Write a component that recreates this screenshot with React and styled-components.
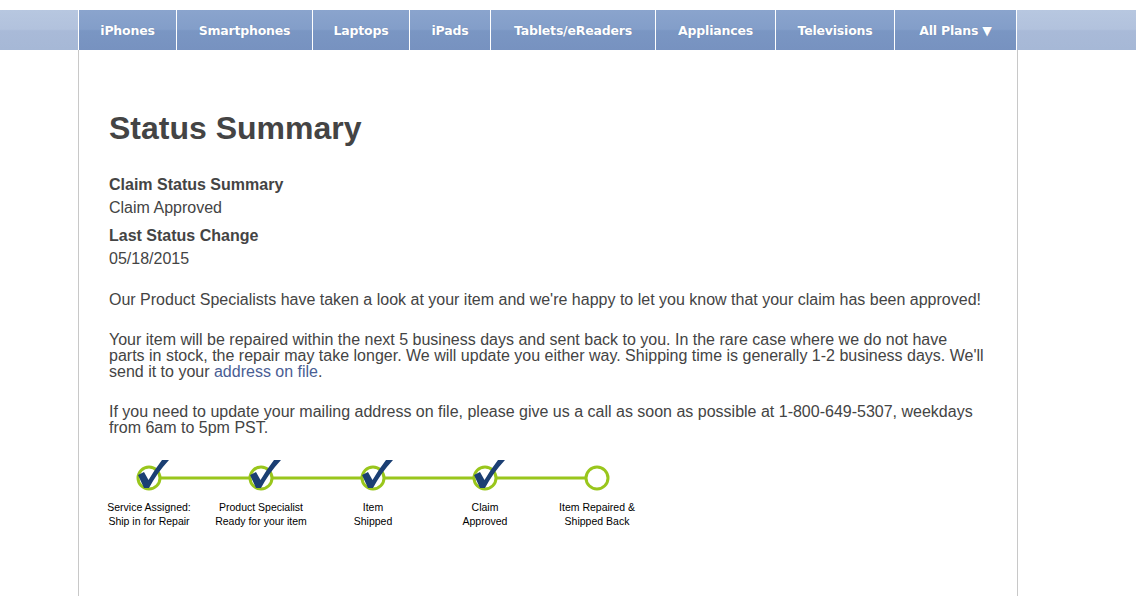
import React from "react";
import styled, { createGlobalStyle } from "styled-components";

const GlobalStyle = createGlobalStyle`
  html, body {
    margin: 0;
    padding: 0;
    background: #fff;
    font-family: "Liberation Sans", Arial, sans-serif;
  }
`;

const NAV_ITEMS = [
  { label: "iPhones", width: 98 },
  { label: "Smartphones", width: 136 },
  { label: "Laptops", width: 97 },
  { label: "iPads", width: 81 },
  { label: "Tablets/eReaders", width: 165 },
  { label: "Appliances", width: 120 },
  { label: "Televisions", width: 119 },
  { label: "All Plans \u25BC", width: 123 },
];

const STEPS = [
  { lines: ["Service Assigned:", "Ship in for Repair"], done: true },
  { lines: ["Product Specialist", "Ready for your item"], done: true },
  { lines: ["Item", "Shipped"], done: true },
  { lines: ["Claim", "Approved"], done: true },
  { lines: ["Item Repaired &", "Shipped Back"], done: false },
];

const StepMark = ({ done, first, last }) => (
  <svg width="112" height="40" viewBox="0 0 112 40">
    {!first && <line x1="0" y1="20" x2="44" y2="20" stroke="#99c61c" strokeWidth="3" />}
    {!last && <line x1="68" y1="20" x2="112" y2="20" stroke="#99c61c" strokeWidth="3" />}
    <circle cx="56" cy="20" r="11" fill="#fff" stroke="#99c61c" strokeWidth="3" />
    {done && (
      <path
        d="M45,17 L51,14 L55.5,22 Q62,11 69,2 L76,2 Q64,15 56,30 L51,30 Z"
        fill="#1b3f73"
      />
    )}
  </svg>
);

const App = () => {
  return (
    <>
      <GlobalStyle />
      <Header>
        <Nav>
          {NAV_ITEMS.map((item, i) => (
            <NavItem key={item.label} $width={item.width} $last={i === NAV_ITEMS.length - 1}>
              {item.label}
            </NavItem>
          ))}
        </Nav>
      </Header>

      <Page>
        <Title>Status Summary</Title>

        <Detail>
          <DetailLabel>Claim Status Summary</DetailLabel>
          <DetailValue>Claim Approved</DetailValue>
        </Detail>
        <Detail>
          <DetailLabel>Last Status Change</DetailLabel>
          <DetailValue>05/18/2015</DetailValue>
        </Detail>

        <Paragraph $first>
          Our Product Specialists have taken a look at your item and we're happy to let you know
          that your claim has been approved!
        </Paragraph>
        <Paragraph>
          Your item will be repaired within the next 5 business days and sent back to you. In the
          rare case where we do not have parts in stock, the repair may take longer. We will update
          you either way. Shipping time is generally 1-2 business days. We'll send it to your{" "}
          <Link href="#">address on file</Link>.
        </Paragraph>
        <Paragraph>
          If you need to update your mailing address on file, please give us a call as soon as
          possible at 1-800-649-5307, weekdays from 6am to 5pm PST.
        </Paragraph>

        <Timeline>
          {STEPS.map((step, i) => (
            <Step key={i}>
              <StepMark done={step.done} first={i === 0} last={i === STEPS.length - 1} />
              <StepLabel>
                {step.lines[0]}
                <br />
                {step.lines[1]}
              </StepLabel>
            </Step>
          ))}
        </Timeline>
      </Page>
    </>
  );
};

export default App;

const Header = styled.div`
  margin-top: 10px;
  height: 40px;
  background: linear-gradient(to bottom, #b7c7e0 0%, #b2c2dd 48%, #a9bad8 52%, #a6b8d6 100%);
`;

const Nav = styled.nav`
  display: flex;
  height: 40px;
  margin-left: 78px;
  width: 940px;
`;

const NavItem = styled.div`
  box-sizing: border-box;
  width: ${(p) => p.$width}px;
  height: 40px;
  display: flex;
  align-items: center;
  justify-content: center;
  border-left: 1px solid #fff;
  border-right: ${(p) => (p.$last ? "1px solid #fff" : "none")};
  background: linear-gradient(to bottom, #8aa4cd 0%, #839ec9 48%, #7a96c3 52%, #7792c0 100%);
  color: #fff;
  font-family: "DejaVu Sans", Verdana, sans-serif;
  font-weight: bold;
  font-size: 12.5px;
  letter-spacing: -0.2px;
  text-shadow: 0 0 1px rgba(60, 80, 120, 0.4);
`;

const Page = styled.main`
  box-sizing: border-box;
  margin-left: 78px;
  width: 940px;
  min-height: calc(100vh - 50px);
  border-left: 1px solid #c8c8c8;
  border-right: 1px solid #c8c8c8;
  padding: 60px 30px 40px 30px;
  color: #444;
`;

const Title = styled.h1`
  margin: 0 0 26px 0;
  font-size: 32px;
  line-height: 37px;
  font-weight: bold;
  color: #444;
`;

const Detail = styled.div`
  margin-bottom: 5px;
`;

const DetailLabel = styled.div`
  font-size: 16px;
  line-height: 23px;
  font-weight: bold;
`;

const DetailValue = styled.div`
  font-size: 16px;
  line-height: 23px;
`;

const Paragraph = styled.p`
  margin: ${(p) => (p.$first ? "22px" : "24px")} 0 0 0;
  font-size: 16px;
  line-height: 16px;
`;

const Link = styled.a`
  display: inline-block;
  line-height: 16px;
  color: #4a5e94;
  text-decoration: none;
`;

const Timeline = styled.div`
  display: flex;
  margin: 22px 0 0 -16px;
`;

const Step = styled.div`
  width: 112px;
  display: flex;
  flex-direction: column;
  align-items: center;
`;

const StepLabel = styled.div`
  margin-top: 2px;
  font-size: 10.5px;
  line-height: 14px;
  color: #000;
  text-align: center;
  white-space: nowrap;
`;
